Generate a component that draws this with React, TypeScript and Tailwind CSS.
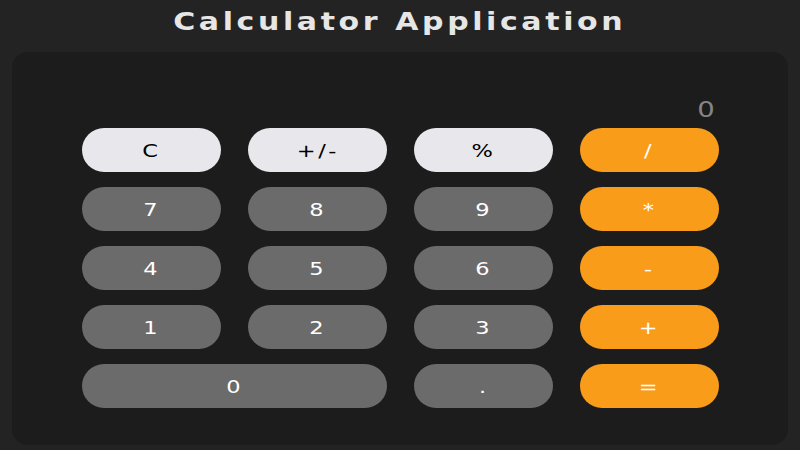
const KEYS: { label: string; kind: "fn" | "num" | "op"; wide?: boolean }[] = [
  { label: "C", kind: "fn" },
  { label: "+/-", kind: "fn" },
  { label: "%", kind: "fn" },
  { label: "/", kind: "op" },
  { label: "7", kind: "num" },
  { label: "8", kind: "num" },
  { label: "9", kind: "num" },
  { label: "*", kind: "op" },
  { label: "4", kind: "num" },
  { label: "5", kind: "num" },
  { label: "6", kind: "num" },
  { label: "-", kind: "op" },
  { label: "1", kind: "num" },
  { label: "2", kind: "num" },
  { label: "3", kind: "num" },
  { label: "+", kind: "op" },
  { label: "0", kind: "num", wide: true },
  { label: ".", kind: "num" },
  { label: "=", kind: "op" },
];

function keyClass(kind: "fn" | "num" | "op") {
  if (kind === "fn") return "bg-[#e8e8ec] text-black";
  if (kind === "op") return "bg-[#f99c1a] text-white";
  return "bg-[#6b6b6b] text-white";
}

export default function App() {
  return (
    <div
      className="h-[450px] w-[800px] overflow-hidden bg-[#232323] text-white"
      style={{ fontFamily: '"DejaVu Sans", "Open Sans", sans-serif' }}
    >
      <h1 className="flex h-[52px] items-center justify-center pb-2 text-[25px] font-bold text-[#e6e6e6]">
        <span className="inline-block scale-x-[1.2] tracking-[3px]">Calculator Application</span>
      </h1>
      <div className="mx-3 h-[393px] rounded-2xl bg-[#1c1c1c] pl-[70px] pr-[69px] pt-[38px]">
        <div className="flex h-[38px] items-center justify-end pr-[6px] text-[22px] text-[#858585]">
          <span className="inline-block scale-x-125">0</span>
        </div>
        <div className="grid grid-cols-4 gap-x-[27px] gap-y-[15px]">
          {KEYS.map((k) => (
            <button
              key={k.label}
              className={`h-[44px] rounded-full text-[18px] ${keyClass(k.kind)} ${k.wide ? "col-span-2" : ""}`}
            >
              <span className="inline-block scale-x-125 tracking-[2px]">{k.label}</span>
            </button>
          ))}
        </div>
      </div>
    </div>
  );
}
